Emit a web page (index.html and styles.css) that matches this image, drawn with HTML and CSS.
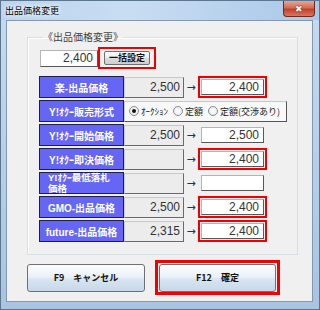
FILE: index.html
```html
<!DOCTYPE html>
<html lang="ja">
<head>
    <meta charset="UTF-8">
    <meta name="viewport" content="width=device-width, initial-scale=1.0">
    <title>出品価格変更</title>
    <link rel="stylesheet" href="styles.css">
</head>
<body>

    <div class="window">
        <div class="titlebar">
            <span class="title">出品価格変更</span>
            <span class="close">&#x2716;</span>
        </div>

        <div class="client">
            <fieldset class="group">
                <legend>《出品価格変更》</legend>

                <div class="top-row">
                    <div class="box box-top">2,400</div>
                    <div class="mark mark-top">
                        <button class="bulk">一括設定</button>
                    </div>
                </div>

                <div class="rows">
                    <div class="row">
                        <div class="label">楽-出品価格</div>
                        <div class="old">2,500</div>
                        <div class="arrow">→</div>
                        <div class="newwrap hl"><div class="box">2,400</div></div>
                    </div>

                    <div class="row">
                        <div class="label">Y!ｵｸｰ販売形式</div>
                        <div class="radios">
                            <span class="radio checked"></span><span class="rtext">ｵｰｸｼｮﾝ</span>
                            <span class="radio"></span><span class="rtext">定額</span>
                            <span class="radio"></span><span class="rtext">定額(交渉あり)</span>
                        </div>
                    </div>

                    <div class="row">
                        <div class="label">Y!ｵｸｰ開始価格</div>
                        <div class="old">2,500</div>
                        <div class="arrow">→</div>
                        <div class="newwrap"><div class="box">2,500</div></div>
                    </div>

                    <div class="row">
                        <div class="label">Y!ｵｸｰ即決価格</div>
                        <div class="old"></div>
                        <div class="arrow">→</div>
                        <div class="newwrap hl"><div class="box">2,400</div></div>
                    </div>

                    <div class="row">
                        <div class="label label-wrap">Y!ｵｸｰ最低落札<br>価格</div>
                        <div class="old"></div>
                        <div class="arrow">→</div>
                        <div class="newwrap"><div class="box"></div></div>
                    </div>

                    <div class="row">
                        <div class="label">GMO-出品価格</div>
                        <div class="old">2,500</div>
                        <div class="arrow">→</div>
                        <div class="newwrap hl"><div class="box">2,400</div></div>
                    </div>

                    <div class="row">
                        <div class="label">future-出品価格</div>
                        <div class="old">2,315</div>
                        <div class="arrow">→</div>
                        <div class="newwrap hl"><div class="box">2,400</div></div>
                    </div>
                </div>
            </fieldset>

            <div class="buttons">
                <button class="btn">F9　キャンセル</button>
                <div class="mark mark-btn">
                    <button class="btn">F12　確定</button>
                </div>
            </div>
        </div>
    </div>

</body>
</html>
```

FILE: styles.css
```css
body {
    margin: 0;
    padding: 0;
    font-family: "Noto Sans CJK JP", sans-serif;
    background-color: #fff;
}

.window {
    width: 320px;
    height: 310px;
    box-sizing: border-box;
    border: 1px solid #5d7690;
    background: linear-gradient(to bottom, #c6dbf0, #b4cde8 60%, #a9c4e2);
}

/* barre de titre */
.titlebar {
    height: 19px;
    display: flex;
    justify-content: space-between;
    align-items: flex-start;
    background: linear-gradient(to right, #bcd4ee, #c9ddf2 40%, #a9c8e8);
}

.title {
    font-size: 9px;
    line-height: 9px;
    margin: 5px 0 0 4px;
    color: #000;
    text-shadow: 0 0 4px #fff, 0 0 6px #fff;
}

.close {
    width: 30px;
    height: 15px;
    margin-right: 4px;
    border: 1px solid #6e2a22;
    border-top: none;
    border-radius: 0 0 4px 4px;
    background: linear-gradient(to bottom, #eaa493, #d36c55 45%, #c2402a 55%, #d7785c);
    color: #fff;
    font-size: 9px;
    line-height: 15px;
    text-align: center;
    text-shadow: 0 0 1px #4a0f08, 0 0 1px #4a0f08;
}

.client {
    width: 307px;
    height: 282px;
    box-sizing: border-box;
    margin-left: 5px;
    border: 1px solid #8397ae;
    background-color: #f0f0f0;
    padding: 0 0 0 20px;
}

/* cadre principal */
.group {
    width: 265px;
    box-sizing: border-box;
    margin: 9px 0 0 0;
    padding: 3px 10px 12px 11px;
    border: 1px solid #d5dfe5;
    box-shadow: inset 1px 1px 0 #fff;
}

.group legend {
    font-size: 10px;
    line-height: 14px;
    color: #444;
    padding: 0;
    margin-left: 4px;
}

.top-row {
    display: flex;
    align-items: center;
    height: 22px;
}

.box {
    box-sizing: border-box;
    background-color: #fff;
    border: 1px solid;
    border-color: #b4b4b4 #585858 #585858 #b4b4b4;
    font-family: "Liberation Sans", sans-serif;
    font-size: 12px;
    color: #333;
    text-align: right;
    padding-right: 4px;
}

.box-top {
    width: 58px;
    height: 17px;
    line-height: 15px;
    margin-left: 1px;
}

.mark {
    box-sizing: border-box;
    border: 2px solid #f00000;
    display: flex;
    align-items: center;
    justify-content: center;
}

.mark-top {
    width: 58px;
    height: 22px;
}

.bulk {
    width: 46px;
    height: 14px;
    padding: 0;
    border: 1px solid #707070;
    border-radius: 2px;
    background: linear-gradient(to bottom, #fbfbfb, #ececec 50%, #dcdcdc 51%, #cfcfcf);
    font-family: "Noto Sans CJK JP", sans-serif;
    font-size: 9px;
    font-weight: bold;
    line-height: 12px;
    color: #111;
}

.rows {
    margin-top: 7px;
    display: flex;
    flex-direction: column;
    gap: 2px;
}

.row {
    display: flex;
    align-items: center;
    height: 22px;
}

.label {
    width: 85px;
    height: 22px;
    box-sizing: border-box;
    border: 1px solid #1d1d52;
    background-color: #6666f4;
    color: #fff;
    font-family: "Liberation Sans", "Noto Sans CJK JP", sans-serif;
    font-size: 10px;
    font-weight: bold;
    display: flex;
    align-items: center;
    justify-content: center;
    white-space: nowrap;
}

.label-wrap {
    justify-content: flex-start;
    padding-left: 8px;
    font-size: 9.5px;
    line-height: 11px;
}

.old {
    width: 60px;
    height: 21px;
    box-sizing: border-box;
    background-color: #ececec;
    border: 1px solid;
    border-color: #c8c8c8 #6a6a6a #6a6a6a #c8c8c8;
    font-family: "Liberation Sans", sans-serif;
    font-size: 12px;
    line-height: 19px;
    color: #333;
    text-align: right;
    padding-right: 3px;
}

.arrow {
    width: 14px;
    text-align: center;
    font-family: "DejaVu Sans", sans-serif;
    font-size: 11px;
    color: #333;
}

.newwrap {
    width: 69px;
    height: 22px;
    box-sizing: border-box;
    border: 2px solid transparent;
    padding: 1px;
}

.newwrap.hl {
    border-color: #f00000;
}

.newwrap .box {
    width: 100%;
    height: 100%;
    line-height: 14px;
}

.radios {
    width: 163px;
    height: 21px;
    box-sizing: border-box;
    border: 1px solid;
    border-color: #c8c8c8 #555 #555 #c8c8c8;
    background-color: #f8f8f8;
    display: flex;
    align-items: center;
    padding-left: 4px;
}

.radio {
    width: 8px;
    height: 8px;
    border: 1px solid #8c8c8c;
    border-radius: 50%;
    background: radial-gradient(circle, #fff, #dfe6ee);
    margin-right: 2px;
    position: relative;
}

.radio.checked::after {
    content: "";
    position: absolute;
    left: 2px;
    top: 2px;
    width: 4px;
    height: 4px;
    border-radius: 50%;
    background-color: #111;
}

.rtext {
    font-size: 9px;
    color: #222;
    margin-right: 5px;
    white-space: nowrap;
}

.buttons {
    display: flex;
    align-items: center;
    gap: 10px;
    margin-top: 5px;
}

.btn {
    width: 118px;
    height: 28px;
    padding: 0;
    border: 1px solid #707070;
    border-radius: 3px;
    background: linear-gradient(to bottom, #fbfdff, #eaf1f8 45%, #d8e5f1 55%, #c6d8e8);
    font-family: "Noto Sans CJK JP", sans-serif;
    font-size: 9px;
    font-weight: bold;
    color: #111;
}

.mark-btn {
    width: 125px;
    height: 35px;
    border-width: 3px;
}

.mark-btn .btn {
    width: 117px;
}
```
